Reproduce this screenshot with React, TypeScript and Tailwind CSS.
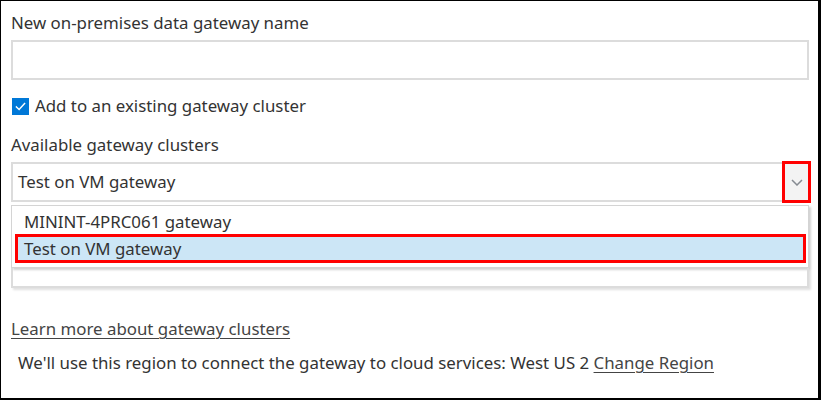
export default function App() {
  const font = { fontFamily: '"Noto Sans", "Open Sans", sans-serif' };
  return (
    <div
      className="w-[821px] h-[400px] bg-white border-t border-l border-r-[3px] border-b-2 border-black text-[#333333] text-[16.85px] leading-[20px] pl-[10px] pr-[9px] pt-[12px] flex flex-col"
      style={font}
    >
      {/* Gateway name */}
      <div className="h-[20px] whitespace-nowrap">New on-premises data gateway name</div>
      <div className="mt-[7px] h-[40px] border-2 border-[#dcdcdc] bg-white" />

      {/* Cluster checkbox */}
      <div className="mt-[16px] h-[20px] flex items-center">
        <span className="ml-[1px] w-[17px] h-[17px] bg-[#0078d7] flex items-center justify-center">
          <svg width="13" height="13" viewBox="0 0 16 16" fill="none" stroke="white" strokeWidth="1.8" strokeLinecap="square">
            <path d="M3 8.5 6.3 11.7 13 4.5" />
          </svg>
        </span>
        <span className="ml-[6px] whitespace-nowrap">Add to an existing gateway cluster</span>
      </div>

      {/* Available clusters */}
      <div className="mt-[19px] h-[20px] whitespace-nowrap">Available gateway clusters</div>
      <div className="relative mt-[7px] h-[40px] border-2 border-[#dcdcdc] flex items-center pl-[5px]">
        <span className="whitespace-nowrap">Test on VM gateway</span>
        <div className="absolute -top-[3px] -right-[4px] w-[29px] h-[42px] border-[3px] border-[#ff0000] bg-[#f3f3f3] flex items-center justify-center">
          <svg width="12" height="7" viewBox="0 0 12 7" fill="none" stroke="#858a91" strokeWidth="1.5">
            <path d="M1 1l5 5 5-5" />
          </svg>
        </div>
      </div>

      {/* Dropdown list */}
      <div className="mt-[3px] border border-[#d4d4d4] shadow-[2px_2px_2px_rgba(0,0,0,0.18)] pb-[4px] pr-[2px]">
        <div className="h-[28px] pt-[3px] pl-[12px] flex items-center whitespace-nowrap">MININT-4PRC061 gateway</div>
        <div className="ml-[3px] h-[29px] border-[3px] border-[#ff0000] bg-[#cce6f6] flex items-center pl-[6px] whitespace-nowrap">
          Test on VM gateway
        </div>
      </div>
      <div className="h-[20px] border-2 border-t-0 border-[#dcdcdc] shadow-[2px_2px_2px_rgba(0,0,0,0.12)]" />

      {/* Links */}
      <div className="mt-[31px] h-[20px] whitespace-nowrap">
        <a className="underline underline-offset-[3px] decoration-1 text-[#444444]">Learn more about gateway clusters</a>
      </div>
      <div className="mt-[14px] h-[20px] pl-[7px] whitespace-nowrap">
        We'll use this region to connect the gateway to cloud services: West US 2{' '}
        <a className="underline underline-offset-[3px] decoration-1 text-[#444444]">Change Region</a>
      </div>
    </div>
  );
}
